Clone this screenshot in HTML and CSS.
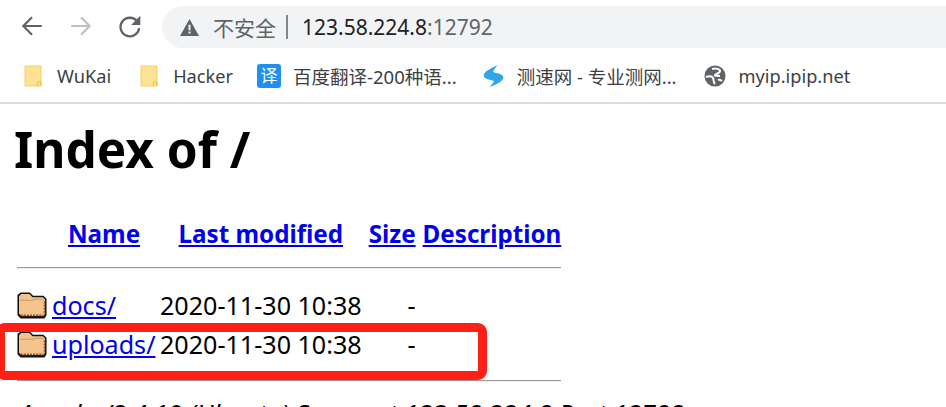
FILE: index.html
```html
<!DOCTYPE html>
<html lang="zh-CN">
<head>
  <meta charset="UTF-8" />
  <title>Index of /</title>
  <link rel="stylesheet" href="styles.css">
</head>
<body>
  <!-- Browser toolbar -->
  <div class="toolbar">
    <svg class="nav-icon" viewBox="0 0 24 24"><path d="M21 12H4M12 4l-8 8 8 8" fill="none" stroke="#5f6368" stroke-width="2"/></svg>
    <svg class="nav-icon" viewBox="0 0 24 24"><path d="M3 12h17M12 4l8 8-8 8" fill="none" stroke="#bdc1c6" stroke-width="2"/></svg>
    <svg class="nav-icon" viewBox="0 0 24 24"><path d="M18.6 7.6A8.6 8.6 0 1 0 20.4 14" fill="none" stroke="#5f6368" stroke-width="2.2"/><path d="M21.5 2.5v8.5H13z" fill="#5f6368"/></svg>
    <div class="address">
      <svg class="warn" viewBox="0 0 18 16"><path d="M9 0l9 16H0z" fill="#5f6368"/><path d="M8 5.5h2v5H8zM8 11.7h2v2H8z" fill="#f1f3f4"/></svg>
      <span class="insecure">不安全</span>
      <span class="divider"></span>
      <span class="host">123.58.224.8</span><span class="port">:12792</span>
    </div>
  </div>

  <!-- Bookmarks -->
  <div class="bookmarks">
    <a class="mark mark-folder">
      <svg class="folder-mark" viewBox="0 0 18 22"><path d="M1 1h11l5 0v20H1z" fill="#fde293" stroke="#f6cf5f"/><path d="M13.5 21v-4h3.5v4" fill="none" stroke="#f0c040"/></svg>
      WuKai
    </a>
    <a class="mark mark-folder">
      <svg class="folder-mark" viewBox="0 0 18 22"><path d="M1 1h11l5 0v20H1z" fill="#fde293" stroke="#f6cf5f"/><path d="M13.5 21v-4h3.5v4" fill="none" stroke="#f0c040"/></svg>
      Hacker
    </a>
    <a class="mark mark-fanyi">
      <span class="fanyi-icon">译</span>
      百度翻译-200种语...
    </a>
    <a class="mark mark-speed">
      <svg class="mark-icon" viewBox="0 0 24 24"><path d="M16 0C10 3 3 6 1 10c-1 3 2 5 6 6 3 .5 4 1 5 1.500C11 20 9 22 7 24c6-2 13-5 15-9 1-3-2-5-6-6-3-.5-5-1-5-2 1-2 3-5 5-7z" fill="#2ea6e8"/></svg>
      测速网 - 专业测网...
    </a>
    <a class="mark mark-globe">
      <svg class="mark-icon" viewBox="0 0 22 22"><circle cx="11" cy="11" r="10.500" fill="#5f6368"/><path d="M8 4c4-1 8 0 8 2s-4 3-5 4 3 1 5 1M2 12c3-1 6-1 7 1s0 4 2 6M14 15c2-1 3 0 4 1" fill="none" stroke="#fff" stroke-width="2"/></svg>
      myip.ipip.net
    </a>
  </div>

  <!-- Directory listing -->
  <div class="page">
    <h1>Index of /</h1>
    <table class="listing">
      <tr>
        <th class="icon-col"></th>
        <th class="name-col"><a href="#">Name</a></th>
        <th><a href="#">Last modified</a></th>
        <th class="size-head"><a href="#">Size</a></th>
        <th><a href="#">Description</a></th>
      </tr>
      <tr><th colspan="5"><hr></th></tr>
      <tr>
        <td class="icon-col"><svg class="folder" viewBox="0 0 30 26"><use href="#folder"/></svg></td>
        <td><a href="#">docs/</a></td>
        <td>2020-11-30 10:38</td>
        <td class="size">-</td>
        <td></td>
      </tr>
      <tr>
        <td class="icon-col"><svg class="folder" viewBox="0 0 30 26"><use href="#folder"/></svg></td>
        <td><a href="#">uploads/</a></td>
        <td>2020-11-30 10:38</td>
        <td class="size">-</td>
        <td></td>
      </tr>
      <tr><th colspan="5"><hr class="hr-last"></th></tr>
    </table>
    <address>Apache/2.4.10 (Ubuntu) Server at 123.58.224.8 Port 12792</address>
    <div class="highlight"></div>
  </div>

  <svg class="defs" width="0" height="0">
    <symbol id="folder" viewBox="0 0 30 26">
      <path d="M1 7V3l3-2.500h9l3 3h10l3 3v16l-2 3H4l-3-3z" fill="#111"/>
      <path d="M2.500 8V4l2-2h8l3 3h10l2 2v14l-1 2H5l-2.500-2z" fill="#f5c48c"/>
      <path d="M4 22.500h22M27 9v13" stroke="#8a5a30" stroke-width="1.500" stroke-dasharray="2 1" fill="none"/>
      <path d="M3 8h13l2-1h9" stroke="#c89868" stroke-width="1" fill="none"/>
    </symbol>
  </svg>
</body>
</html>
```

FILE: styles.css
```css
html, body {
  height: 100%;
}

body {
  margin: 0;
  background: #fff;
  font-family: "Noto Sans", "Noto Sans CJK SC", sans-serif;
  overflow: hidden;
}

.toolbar {
  display: flex;
  align-items: center;
  height: 52px;
  padding: 0 0 0 19px;
  gap: 23px;
  box-sizing: border-box;
}

.nav-icon {
  width: 26px;
  height: 26px;
}

.address {
  display: flex;
  align-items: center;
  flex: 1;
  height: 42px;
  margin-left: -4px;
  padding-left: 18px;
  margin-top: 2px;
  background: #f1f3f4;
  border-radius: 21px 0 0 21px;
  font-size: 21px;
}

.warn {
  width: 19px;
  height: 17px;
}

.insecure {
  margin-left: 14px;
  color: #5f6368;
}

.divider {
  width: 2px;
  height: 24px;
  margin: 0 14px 0 10px;
  background: #80868b;
}

.host {
  color: #202124;
}

.port {
  color: #5f6368;
}

.bookmarks {
  display: flex;
  align-items: center;
  height: 48px;
  padding-bottom: 2px;
  padding-left: 24px;
  border-bottom: 2px solid #dadce0;
  font-size: 18.2px;
  color: #3c4043;
}

.mark {
  display: flex;
  align-items: center;
  white-space: nowrap;
}

.mark-folder {
  margin-right: 29px;
  gap: 15px;
}

.mark-fanyi {
  margin-left: -5px;
  margin-right: 26px;
  gap: 12px;
  font-size: 18.5px;
}

.mark-speed {
  margin-right: 27px;
  gap: 12px;
  font-size: 18.5px;
}

.mark-globe {
  gap: 13px;
}

.folder-mark {
  width: 18px;
  height: 22px;
}

.mark-icon {
  width: 22px;
  height: 22px;
}

.fanyi-icon {
  width: 24px;
  height: 24px;
  background: #1e90f5;
  border-radius: 3px;
  color: #fff;
  font-size: 17px;
  line-height: 24px;
  text-align: center;
}

.page {
  position: relative;
  padding: 13px 13px 0;
  color: #000;
  font-size: 25.1px;
}

h1 {
  margin: 0 0 32px 1px;
  font-size: 49.5px;
  line-height: 65px;
  font-weight: 700;
}

.listing {
  margin-left: 1px;
  border-spacing: 2px;
}

.listing th, .listing td {
  padding: 1px;
  line-height: 35px;
  white-space: nowrap;
}

.listing th {
  font-size: 24.2px;
  line-height: 33px;
}

.listing a {
  color: #0000ee;
}

.listing hr {
  margin: 13px 0 15px;
  border: 0;
  border-top: 1px solid #999;
  border-bottom: 1px solid #eee;
}

.listing .hr-last {
  margin: 14px 0 10px;
}

.icon-col {
  width: 29px;
}

.folder {
  display: block;
  width: 32px;
  height: 27px;
  margin-left: -1px;
}

.name-col {
  min-width: 104px;
}

.listing .size-head {
  padding: 1px 4px;
}

.listing .size {
  padding-right: 4px;
  text-align: right;
}

address {
  margin-left: 6px;
  font-size: 25.8px;
  font-style: italic;
}

.highlight {
  position: absolute;
  left: -4px;
  top: 219px;
  width: 473px;
  height: 39px;
  border: 9px solid #ff2015;
  border-radius: 9px;
}

.defs {
  position: absolute;
}
```
